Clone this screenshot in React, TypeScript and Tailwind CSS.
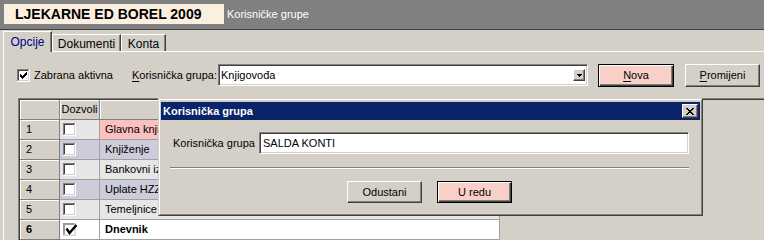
import React from "react";

const raised =
  "border border-t-white border-l-white border-r-[#404040] border-b-[#404040] shadow-[inset_-1px_-1px_0_#808080]";
const defaultBtn =
  "border border-black shadow-[inset_1px_1px_0_#fff,inset_-1px_-1px_0_#404040,inset_-2px_-2px_0_#808080]";
const sunken =
  "border border-t-[#808080] border-l-[#808080] border-r-white border-b-white shadow-[inset_1px_1px_0_#404040,inset_-1px_-1px_0_#D4D0C8]";

function CheckBox({ checked = false }: { checked?: boolean }) {
  return (
    <svg width="13" height="13" viewBox="0 0 13 13" shapeRendering="crispEdges" className="shrink-0">
      <rect x="0" y="0" width="13" height="13" fill="#fff" />
      <rect x="0" y="0" width="12" height="1" fill="#808080" />
      <rect x="0" y="0" width="1" height="12" fill="#808080" />
      <rect x="1" y="1" width="10" height="1" fill="#404040" />
      <rect x="1" y="1" width="1" height="10" fill="#404040" />
      <rect x="1" y="11" width="11" height="1" fill="#D4D0C8" />
      <rect x="11" y="1" width="1" height="11" fill="#D4D0C8" />
      {checked && (
        <path
          d="M3 5h1v3H3z M4 6h1v3H4z M5 7h1v3H5z M6 6h1v3H6z M7 5h1v3H7z M8 4h1v3H8z M9 3h1v3H9z"
          fill="#000"
        />
      )}
    </svg>
  );
}

function BigCheckBox() {
  return (
    <svg width="15" height="13" viewBox="0 0 15 13" className="shrink-0">
      <rect x="0" y="0" width="13" height="13" fill="#fff" />
      <rect x="0" y="0" width="13" height="2" fill="#9a9a9a" />
      <rect x="0" y="0" width="2" height="13" fill="#9a9a9a" />
      <rect x="11.5" y="0" width="1.5" height="13" fill="#d8d8d8" />
      <rect x="0" y="11.5" width="13" height="1.5" fill="#d8d8d8" />
      <polyline points="3.5,5.5 6.5,10 13.5,2" fill="none" stroke="#000" strokeWidth="2.4" />
    </svg>
  );
}

function CloseX() {
  return (
    <svg width="8" height="7" viewBox="0 0 8 7" shapeRendering="crispEdges">
      <path
        d="M0 0h2v1H0z M6 0h2v1H6z M1 1h2v1H1z M5 1h2v1H5z M2 2h4v1H2z M3 3h2v1H3z M2 4h4v1H2z M1 5h2v1H1z M5 5h2v1H5z M0 6h2v1H0z M6 6h2v1H6z"
        fill="#000"
      />
    </svg>
  );
}

function DownArrow() {
  return (
    <svg width="5" height="3" viewBox="0 0 5 3" shapeRendering="crispEdges">
      <path d="M0 0h5v1H0z M1 1h3v1H1z M2 2h1v1H2z" fill="#000" />
    </svg>
  );
}

type Row = { n: string; bg: string; nameBg: string; text: string; checked?: boolean; current?: boolean };

const rows: Row[] = [
  { n: "1", bg: "bg-[#E6E6E6]", nameBg: "bg-[#FCC0C0]", text: "Glavna knjiga" },
  { n: "2", bg: "bg-[#CCCCDA]", nameBg: "bg-[#CCCCDA]", text: "Knjiženje" },
  { n: "3", bg: "bg-[#E6E6E6]", nameBg: "bg-[#E6E6E6]", text: "Bankovni izvodi" },
  { n: "4", bg: "bg-[#CCCCDA]", nameBg: "bg-[#CCCCDA]", text: "Uplate HZZO" },
  { n: "5", bg: "bg-[#E6E6E6]", nameBg: "bg-[#E6E6E6]", text: "Temeljnice" },
  { n: "6", bg: "bg-white", nameBg: "bg-white", text: "Dnevnik", checked: true, current: true },
];

export default function App() {
  return (
    <div className="relative w-[764px] h-[240px] overflow-hidden bg-[#D4D0C8] font-['Liberation_Sans',Arial,sans-serif] text-[11px] leading-[13px] text-black">
      {/* header */}
      <div className="h-[30px] bg-[#808080] border-b border-[#404040] flex items-start pt-[4px] pl-[4px]">
        <div className="w-[220px] h-[20px] bg-[#FBF0DF] flex items-center pl-[11px] font-bold text-[14px] leading-[16px]">
          LJEKARNE ED BOREL 2009
        </div>
        <div className="h-[21px] flex items-center pl-[3px] text-white">Korisničke grupe</div>
      </div>

      {/* tabs */}
      <div className="h-[21px] flex items-end pl-[3px] text-[12px] leading-[14px]">
        <div className="relative z-10 -mb-px h-[21px] w-[49px] bg-[#D4D0C8] border-t border-l border-r border-t-white border-l-white border-r-[#404040] shadow-[inset_-1px_0_0_#808080] flex justify-center pt-[3px] text-[#000080]">
          Opcije
        </div>
        <div className="h-[17px] w-[69px] border-t border-l border-r border-t-white border-l-white border-r-[#404040] shadow-[inset_-1px_0_0_#808080] flex justify-center pt-[2px]">
          Dokumenti
        </div>
        <div className="h-[17px] w-[45px] border-t border-l border-r border-t-white border-l-white border-r-[#404040] shadow-[inset_-1px_0_0_#808080] flex justify-center pt-[2px]">
          Konta
        </div>
      </div>

      {/* panel */}
      <div className="ml-[3px] border-t border-l border-white h-[200px]">
        <div className="mt-[12px] h-[23px] flex items-center pl-[13px]">
          <CheckBox checked />
          <span className="ml-[4px] w-[98px]">Zabrana aktivna</span>
          <span className="w-[86px]">
            <span className="underline underline-offset-[2px]">K</span>orisnička grupa:
          </span>
          <div className={`self-start w-[370px] h-[22px] bg-white flex items-center justify-between pl-[2px] ${sunken}`}>
            <span>Knjigovođa</span>
            <div className={`mr-[2px] w-[12px] h-[12px] bg-[#D4D0C8] flex items-center justify-center ${raised}`}>
              <DownArrow />
            </div>
          </div>
          <div className={`ml-[10px] w-[76px] h-[23px] bg-[#F8D0C8] flex items-center justify-center ${defaultBtn}`}>
            <span className="underline underline-offset-[2px]">N</span>ova
          </div>
          <div className={`ml-[11px] w-[75px] h-[23px] bg-[#D4D0C8] flex items-center justify-center ${raised}`}>
            <span className="underline underline-offset-[2px]">P</span>romijeni
          </div>
        </div>

        {/* grid */}
        <div className="mt-[11px] ml-[14px] border-t border-l border-[#808080]">
          <div className="border-t border-l border-[#404040]">
            <div className="flex h-[20px]">
              <div className="w-[40px] h-[20px] bg-[#D4D0C8] border-r border-b border-[#808080] shadow-[inset_1px_1px_0_#fff]" />
              <div className="w-[40px] h-[20px] bg-[#D4D0C8] border-r border-b border-[#808080] shadow-[inset_1px_1px_0_#fff] flex items-center justify-center">
                Dozvoli
              </div>
              <div className="w-[400px] h-[20px] bg-[#D4D0C8] border-r border-b border-[#808080] shadow-[inset_1px_1px_0_#fff]" />
            </div>
            {rows.map((r) => (
              <div key={r.n} className="flex h-[20px]">
                <div
                  className={`w-[40px] h-[20px] bg-[#D4D0C8] border-r border-b border-[#808080] shadow-[inset_1px_1px_0_#fff] flex items-center pl-[6px] ${
                    r.current ? "font-bold" : ""
                  }`}
                >
                  {r.n}
                </div>
                <div className={`w-[40px] h-[20px] border-r border-b border-[#A0A0A0] flex items-start pl-[3px] pt-[3px] ${r.bg}`}>
                  {r.current ? <BigCheckBox /> : <CheckBox />}
                </div>
                <div
                  className={`w-[400px] h-[20px] border-r border-b border-[#A0A0A0] flex items-center pl-[5px] ${r.nameBg} ${
                    r.current ? "font-bold" : ""
                  }`}
                >
                  {r.text}
                </div>
              </div>
            ))}
          </div>
        </div>
      </div>

      {/* dialog overlay */}
      <div className="absolute left-[158px] top-[98px] w-[545px] h-[118px] border border-t-[#D4D0C8] border-l-[#D4D0C8] border-r-[#404040] border-b-[#404040]">
        <div className="h-full bg-[#D4D0C8] border border-t-white border-l-white border-r-[#808080] border-b-[#808080] px-[1px] pt-[2px]">
          <div className="h-[18px] bg-[#0A246A] flex items-center justify-between pl-[2px] pr-[2px]">
            <span className="text-white font-bold">Korisnička grupa</span>
            <div className={`w-[16px] h-[14px] bg-[#D4D0C8] flex items-center justify-center ${raised}`}>
              <CloseX />
            </div>
          </div>
          <div className="mt-[12px] pl-[12px] flex items-center">
            <span className="w-[86px]">Korisnička grupa</span>
            <div className={`w-[430px] h-[22px] bg-white flex items-center pl-[3px] ${sunken}`}>SALDA KONTI</div>
          </div>
          <div className="ml-[9px] mt-[13px] w-[519px] border-t border-b border-t-[#808080] border-b-white" />
          <div className="mt-[12px] ml-[186px] flex gap-[15px]">
            <div className={`w-[75px] h-[22px] bg-[#D4D0C8] flex items-center justify-center ${raised}`}>Odustani</div>
            <div className={`w-[75px] h-[22px] bg-[#F8D0C8] flex items-center justify-center ${defaultBtn}`}>U redu</div>
          </div>
        </div>
      </div>
    </div>
  );
}
